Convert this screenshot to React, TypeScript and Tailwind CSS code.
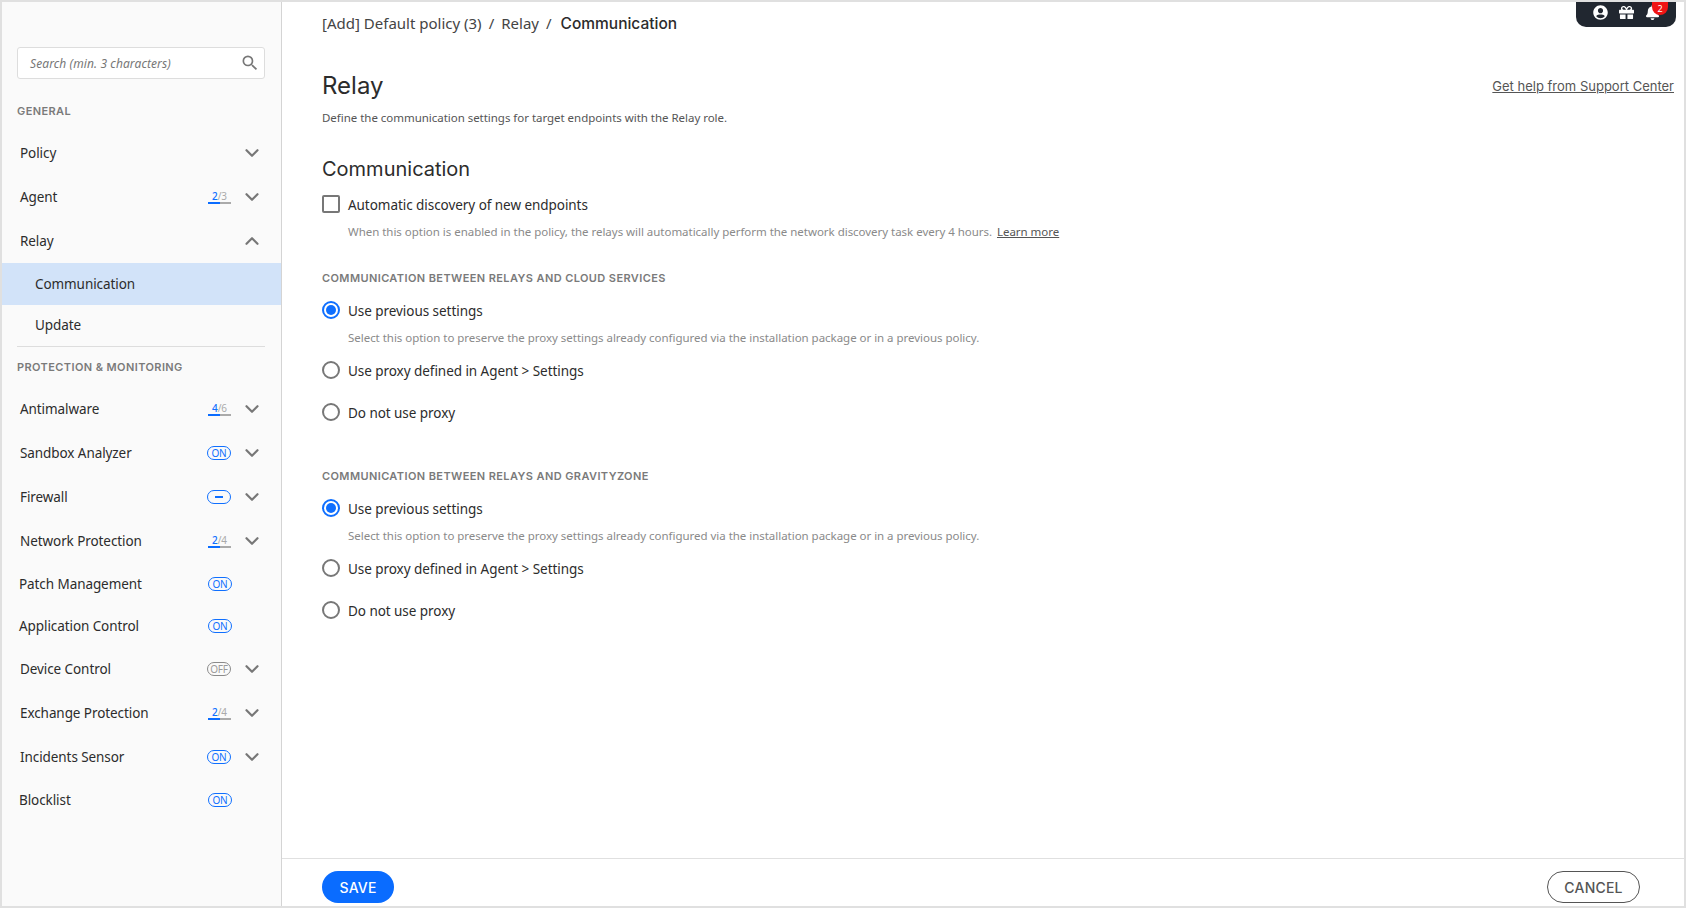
import { ChevronDown, ChevronUp } from "lucide-react";
import { FaBell, FaGift, FaUserCircle } from "react-icons/fa";
import { MdSearch } from "react-icons/md";

const plex = "font-['Noto_Sans','Liberation_Sans',sans-serif]";
const mont = "font-['Inter','Liberation_Sans',sans-serif]";

type Badge = { kind: "ratio"; done: number; total: number } | { kind: "on" } | { kind: "off" } | { kind: "partial" };

type NavItem = { label: string; badge?: Badge; expandable?: boolean };

function NavBadge({ badge }: { badge: Badge }) {
  if (badge.kind === "ratio") {
    return (
      <div className="relative flex h-[14px] w-[23px] justify-center border-b-2 border-[#aaaaaa]">
        <span className={`${plex} text-[10px] leading-[12px] text-[#aaaaaa]`}>
          <span className="font-medium text-[#0f6fff]">{badge.done}</span>/{badge.total}
        </span>
        <div className="absolute -bottom-[2px] left-0 h-[2px] w-[12px] bg-[#0a6cff]" />
      </div>
    );
  }
  if (badge.kind === "partial") {
    return (
      <div className="flex h-[14px] w-[24px] items-center justify-center rounded-full border border-[#0f6fff]">
        <div className="h-[2px] w-[8px] bg-[#0f6fff]" />
      </div>
    );
  }
  const on = badge.kind === "on";
  return (
    <div
      className={`${plex} flex h-[14px] w-[24px] items-center justify-center rounded-full border text-[10px] tracking-[-0.3px] ${
        on ? "border-[#0f6fff] text-[#0f6fff]" : "border-[#8a8a8a] text-[#9a9a9a]"
      }`}
    >
      {on ? "ON" : "OFF"}
    </div>
  );
}

function NavRow({ item }: { item: NavItem }) {
  if (item.expandable) {
    return (
      <div className="flex h-[44px] items-center pl-[18px] pr-[18px]">
        <span className={`${plex} flex-1 text-[13.5px] tracking-[-0.08px] text-[#2c2c2c]`}>{item.label}</span>
        {item.badge && <NavBadge badge={item.badge} />}
        <ChevronDown size={22} strokeWidth={2.4} className="ml-[10px] text-[#777777]" />
      </div>
    );
  }
  return (
    <div className="flex h-[42px] items-center pl-[17px] pr-[49px]">
      <span className={`${plex} flex-1 text-[13.5px] tracking-[-0.08px] text-[#2c2c2c]`}>{item.label}</span>
      {item.badge && <NavBadge badge={item.badge} />}
    </div>
  );
}

const protectionItems: NavItem[] = [
  { label: "Antimalware", badge: { kind: "ratio", done: 4, total: 6 }, expandable: true },
  { label: "Sandbox Analyzer", badge: { kind: "on" }, expandable: true },
  { label: "Firewall", badge: { kind: "partial" }, expandable: true },
  { label: "Network Protection", badge: { kind: "ratio", done: 2, total: 4 }, expandable: true },
  { label: "Patch Management", badge: { kind: "on" } },
  { label: "Application Control", badge: { kind: "on" } },
  { label: "Device Control", badge: { kind: "off" }, expandable: true },
  { label: "Exchange Protection", badge: { kind: "ratio", done: 2, total: 4 }, expandable: true },
  { label: "Incidents Sensor", badge: { kind: "on" }, expandable: true },
  { label: "Blocklist", badge: { kind: "on" } },
];

function Sidebar() {
  return (
    <aside className="flex w-[280px] shrink-0 flex-col border-r border-[#d4d4d4] bg-[#fafafa]">
      <div className="pl-[15px] pr-[16px] pt-[45px]">
        <div className="flex h-[32px] items-center rounded-[3px] border border-[#dddddd] bg-white pl-[12px] pr-[4px]">
          <span className={`${plex} mt-[1px] flex-1 text-[12px] italic tracking-[0.1px] text-[#777777]`}>Search (min. 3 characters)</span>
          <MdSearch size={20} className="text-[#777777]" />
        </div>
      </div>
      <div className={`${mont} mt-[12px] flex h-[40px] items-center pl-[15px] text-[11px] font-semibold tracking-[0.4px] text-[#7a7a7a]`}>
        GENERAL
      </div>
      <NavRow item={{ label: "Policy", expandable: true }} />
      <NavRow item={{ label: "Agent", badge: { kind: "ratio", done: 2, total: 3 }, expandable: true }} />
      <div className="flex h-[44px] items-center pl-[18px] pr-[18px]">
        <span className={`${plex} flex-1 text-[13.5px] tracking-[-0.08px] text-[#2c2c2c]`}>Relay</span>
        <ChevronUp size={22} strokeWidth={2.4} className="text-[#777777]" />
      </div>
      <div className={`${plex} flex h-[42px] items-center bg-[#d2e3f9] pl-[33px] text-[13.5px] tracking-[-0.08px] text-[#2c2c2c]`}>
        Communication
      </div>
      <div className={`${plex} flex h-[41px] items-center pl-[33px] text-[13.5px] tracking-[-0.08px] text-[#2c2c2c]`}>Update</div>
      <div className="ml-[15px] mr-[16px] border-t border-[#dddddd]" />
      <div className={`${mont} flex h-[40px] items-center pl-[15px] text-[11px] font-semibold tracking-[0.4px] text-[#7a7a7a]`}>
        PROTECTION &amp; MONITORING
      </div>
      {protectionItems.map((item) => (
        <NavRow key={item.label} item={item} />
      ))}
    </aside>
  );
}

function Radio({ checked, label }: { checked?: boolean; label: string }) {
  return (
    <div className="flex h-[18px] items-center gap-[8px]">
      {checked ? (
        <div className="flex h-[18px] w-[18px] items-center justify-center rounded-full border-2 border-[#0f6fff]">
          <div className="h-[10px] w-[10px] rounded-full bg-[#0f6fff]" />
        </div>
      ) : (
        <div className="h-[18px] w-[18px] rounded-full border-2 border-[#777777]" />
      )}
      <span className={`${plex} mt-[2px] text-[13.5px] tracking-[-0.05px] text-[#2c2c2c]`}>{label}</span>
    </div>
  );
}

function ProxySection({ title }: { title: string }) {
  return (
    <section>
      <h3 className={`${mont} text-[11px] font-semibold leading-[14px] tracking-[0.4px] text-[#7a7a7a]`}>{title}</h3>
      <div className="mt-[16px]">
        <Radio checked label="Use previous settings" />
        <p className={`${plex} mt-[11px] pl-[26px] text-[11.5px] leading-[16px] tracking-[-0.03px] text-[#8a8a8a]`}>
          Select this option to preserve the proxy settings already configured via the installation package or in a previous policy.
        </p>
        <div className="mt-[15px]">
          <Radio label="Use proxy defined in Agent > Settings" />
        </div>
        <div className="mt-[24px]">
          <Radio label="Do not use proxy" />
        </div>
      </div>
    </section>
  );
}

export default function App() {
  return (
    <div className="relative flex h-screen w-full overflow-hidden border-2 border-[#e0e0e0] bg-white">
      <Sidebar />
      <main className="flex min-w-0 flex-1 flex-col">
        <div className="flex-1 pl-[40px] pr-[10px]">
          <div className="flex h-[44px] items-center">
            <div className={`${plex} flex items-baseline gap-[7px] text-[15px] text-[#444444]`}>
              <span>[Add] Default policy (3)</span>
              <span>/</span>
              <span>Relay</span>
              <span>/</span>
              <span className={`${mont} ml-[2px] text-[15.5px] font-medium text-[#2c2c2c]`}>Communication</span>
            </div>
          </div>
          <div className="mt-[22px] flex items-center justify-between">
            <h1 className={`${mont} text-[24px] font-normal leading-[36px] text-[#2c2c2c]`}>Relay</h1>
            <a className={`${mont} mt-[1px] text-[13px] text-[#555555] underline`}>Get help from Support Center</a>
          </div>
          <p className={`${plex} mt-[6px] text-[11.5px] leading-[16px] tracking-[-0.03px] text-[#555555]`}>
            Define the communication settings for target endpoints with the Relay role.
          </p>
          <h2 className={`${mont} mt-[29px] text-[20px] font-normal leading-[28px] text-[#2c2c2c]`}>Communication</h2>
          <div className="mt-[12px] flex h-[18px] items-center gap-[8px]">
            <div className="h-[18px] w-[18px] rounded-[2px] border-2 border-[#777777]" />
            <span className={`${plex} mt-[2px] text-[13.5px] tracking-[-0.05px] text-[#2c2c2c]`}>Automatic discovery of new endpoints</span>
          </div>
          <p className={`${plex} mt-[11px] pl-[26px] text-[11.5px] leading-[16px] tracking-[-0.03px] text-[#8a8a8a]`}>
            When this option is enabled in the policy, the relays will automatically perform the network discovery task every 4 hours.{" "}
            <a className="ml-[2px] text-[#555555] underline">Learn more</a>
          </p>
          <div className="mt-[31px]">
            <ProxySection title="COMMUNICATION BETWEEN RELAYS AND CLOUD SERVICES" />
          </div>
          <div className="mt-[48px]">
            <ProxySection title="COMMUNICATION BETWEEN RELAYS AND GRAVITYZONE" />
          </div>
        </div>
        <footer className="flex h-[48px] shrink-0 items-start justify-between border-t border-[#e0e0e0] pl-[40px] pr-[44px] pt-[12px]">
          <button className={`${mont} h-[32px] w-[72px] rounded-full bg-[#0a6cff] text-[14px] font-medium tracking-[0.2px] text-white`}>SAVE</button>
          <button className={`${mont} h-[32px] w-[93px] rounded-full border border-[#555555] text-[14px] font-medium tracking-[0.2px] text-[#555555]`}>CANCEL</button>
        </footer>
      </main>
      <div className="absolute right-[8px] top-0 flex h-[25px] w-[100px] items-center overflow-hidden rounded-b-[10px] bg-[#212730] pb-[4px] pl-[17px] text-white">
        <FaUserCircle size={15} />
        <FaGift size={15} className="ml-[11px]" />
        <FaBell size={15} className="ml-[11px]" />
        <span className={`${plex} absolute left-[76px] top-0 flex h-[13px] w-[16px] items-center justify-center rounded-b-full bg-[#f01414] text-[9px] leading-none text-white`}>
          2
        </span>
      </div>
    </div>
  );
}
